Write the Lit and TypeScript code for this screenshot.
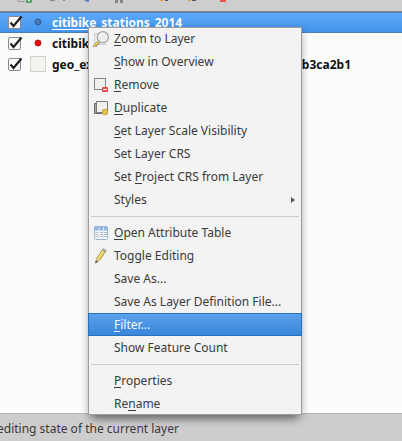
import { LitElement, html, css, svg, nothing } from "lit";
import { customElement } from "lit/decorators.js";
import { classMap } from "lit/directives/class-map.js";

interface Entry { label: string; key?: number; icon?: string; sub?: boolean; active?: boolean; sep?: boolean; }

const entries: Entry[] = [
  { label: "Zoom to Layer", key: 0, icon: "zoom" },
  { label: "Show in Overview", key: 0 },
  { label: "Remove", key: 0, icon: "remove" },
  { label: "Duplicate", key: 0, icon: "duplicate" },
  { label: "Set Layer Scale Visibility", key: 0 },
  { label: "Set Layer CRS" },
  { label: "Set Project CRS from Layer", key: 4 },
  { label: "Styles", sub: true },
  { label: "", sep: true },
  { label: "Open Attribute Table", key: 0, icon: "table" },
  { label: "Toggle Editing", icon: "pencil" },
  { label: "Save As..." },
  { label: "Save As Layer Definition File..." },
  { label: "Filter...", key: 0, active: true },
  { label: "Show Feature Count" },
  { label: "", sep: true },
  { label: "Properties", key: 0 },
  { label: "Rename", key: 2 },
];

const icons: Record<string, unknown> = {
  zoom: svg`<rect x="1.500" y="2.500" width="11" height="11" fill="#e8e8e8" stroke="#d0d0d0"/>
    <path d="M6 11 .8 16" stroke="#777" stroke-width="3"/><path d="M5.600 11.200 1 15.600" stroke="#f0cf45" stroke-width="1.800"/>
    <circle cx="9.900" cy="6.200" r="5.600" fill="#ececec" stroke="#a2a2a2" stroke-width="1.100"/><path d="M6.400 6A3.300 3.300 0 0 1 9.700 2.700" stroke="#fff" fill="none"/>`,
  remove: svg`<rect x="1.500" y="1.500" width="11" height="11" fill="#f0f0ee" stroke="#858585"/>
    <rect x="9" y="10" width="6" height="5" rx="1" fill="#ef4348"/>
    <path d="M10 12.500h4" stroke="#fff"/>`,
  duplicate: svg`<path d="M1.500 3.500h8v10h-8z" fill="#aaa" stroke="#666"/><path d="M3.500 1.500h11v11h-11z" fill="#f0f0ee" stroke="#777"/>
    <rect x="9.500" y="9.500" width="5" height="5" rx="1" fill="#dfc452" stroke="#c4a22c"/>`,
  table: svg`<rect x="1.500" y="1.500" width="13" height="13" rx="1" fill="#f5f8fb" stroke="#98b4d3"/>
    <path d="M1.500 2h13v3.500h-13z" fill="#8fb4de"/><path d="M2.500 7.500h3M2.500 9.500h3M2.500 11.500h3M7 7.500h3M7 9.500h3M7 11.500h3M11 7.500h3M11 9.500h3M11 11.500h3" stroke="#b3bcc6"/>
    <path d="M6 2v12M10.500 2v12" stroke="#dfe9f4"/>`,
  pencil: svg`<path d="M2.500 15 3.700 10.500 9.500 1.500 12.500 3.500 6.800 12z" fill="#e8cc49" stroke="#99863d" stroke-width=".8"/>
    <path d="M5.300 10.500 10.500 2.500" stroke="#f8ea91" stroke-width="1.200"/><path d="M9 2 10.200.500 13.200 2.300 12.300 4z" fill="#bbb" stroke="#888" stroke-width=".6"/>
    <path d="M3.700 10.500 6.800 12 5.200 13.300 3 13z" fill="#ddd1b2"/><path d="M2.300 15.300 3 12.500 5 13.500z" fill="#444"/>`,
};

@customElement("app-root")
export class AppRoot extends LitElement {
  static styles = css`
    :host { display: block; position: relative; width: 402px; height: 441px; overflow: hidden; background: #fcfcfc;
      font: 12px/23px "Noto Sans", sans-serif; color: #3a3a3a; white-space: nowrap; }
    .page { display: flex; flex-direction: column; height: 441px; }
    .tools { height: 11px; background: #cecece; border-bottom: 1px solid #858585; flex: none; }
    .tools svg { display: block; }
    .layers { flex: 1; }
    .layer { display: flex; align-items: center; height: 21px; font-weight: 700; line-height: 21px; color: #111; }
    .layer svg { flex: none; display: block; }
    .layer.sel { background: linear-gradient(#5ea9fa, #4294ec); color: #fff; box-shadow: inset 0 1px #4b7fb8, inset 0 -1px #4b7fb8; }
    .sel .name { text-decoration: underline; text-underline-offset: 2px; text-decoration-thickness: 1px; }
    .tail { margin-left: auto; margin-right: 51px; }
    .status { height: 27px; border-top: 1px solid #b5b8b5; background: #cdcdcd; line-height: 30px; flex: none; text-indent: -3px; }
    .menu { position: absolute; left: 88px; top: 27px; width: 214px; height: 388px; box-sizing: border-box;
      background: #f3f3f3; border: 1px solid #9d9d9d; box-shadow: 0 2px 8px rgba(0,0,0,.26), 0 9px 8px -5px rgba(0,0,0,.35); }
    .items { margin: -1px; }
    .item { display: flex; align-items: center; height: 23px; padding-left: 5px; box-sizing: border-box; }
    .icon { width: 16px; height: 16px; margin-right: 5px; flex: none; }
    .key { display: inline-block; height: 19px; line-height: 23px; border-bottom: 1px solid currentColor; box-sizing: border-box; vertical-align: top; }
    .item.active { background: linear-gradient(#5ca2ec, #3685da); color: #f5f8fc; box-shadow: inset 0 0 0 1px #2e70b8; }
    .arrow { margin-left: auto; margin-right: 7px; width: 4px; height: 6px; }
    .sep { height: 10px; padding: 5px 3px 0; box-sizing: border-box; }
    .sep::before { content: ""; display: block; height: 1px; background: #cbcbcb; }
  `;

  private text(e: Entry) {
    if (e.key === undefined) return e.label;
    return html`${e.label.slice(0, e.key)}<span class="key">${e.label[e.key]}</span>${e.label.slice(e.key + 1)}`;
  }

  private entry(e: Entry) {
    if (e.sep) return html`<div class="sep"></div>`;
    return html`<div class=${classMap({ item: true, active: !!e.active })}>
      <svg class="icon" viewBox="0 0 16 16" fill="none">${e.icon ? icons[e.icon] : nothing}</svg>
      <span class="label">${this.text(e)}</span>
      ${e.sub ? html`<svg class="arrow" viewBox="0 0 4 6"><path d="M0 0 4 3 0 6z" fill="#555"/></svg>` : nothing}
    </div>`;
  }

  private marks(symbol: unknown) {
    return html`<svg width="52" height="21" fill="none">
      <rect x="8.500" y="4.500" width="12" height="12" rx="1.500" fill="#fdfdfd" stroke="#8a8a8a"/>
      <path d="M10.500 10.500 13.500 14 21.500 4.500" stroke="#222" stroke-width="2.200"/>${symbol}</svg>`;
  }

  render() {
    return html`<div class="page">
      <div class="tools"><svg width="402" height="5" fill="none">
        <path d="M18 0v1.500h7" stroke="#999"/><path d="M26 0h6v2l-1 1h-4l-1-1z" fill="#48a05c"/><path d="M28 0h2v1.500h-2z" fill="#d5ead8"/><path d="M50 .5h5M63 .5h2" stroke="#888"/>
        <path d="M84 0h5v2h-2z" fill="#5684c0"/><path d="M115 0h3v3h-3zM120 0h3v3h-3z" fill="#858585"/>
        <path d="M160 0h3v1h-3zM188 0h3v1h-3z" fill="#f49a2c"/><path d="M165 0h3v1h-3zM192 0h4v1h-4z" fill="#46546f"/><path d="M220 0h6v2h-6z" fill="#ef5050"/></svg></div>
      <div class="layers">
        <div class="layer sel">${this.marks(svg`<circle cx="38" cy="10" r="3" fill="#4478b0" stroke="#2e5b8f"/>`)}<span class="name">citibike_stations_2014</span></div>
        <div class="layer">${this.marks(svg`<circle cx="38" cy="10" r="3" fill="#f00" stroke="#a81818"/>`)}<span class="name">citibike</span></div>
        <div class="layer">${this.marks(svg`<rect x="30.500" y="2.500" width="15" height="15" fill="#f3f3f2" stroke="#d2d2c4"/>`)}<span class="name">geo_export</span><span class="tail">b3ca2b1</span></div>
      </div>
      <div class="status">editing state of the current layer</div>
    </div>
    <div class="menu"><div class="items">${entries.map((e) => this.entry(e))}</div></div>`;
  }
}
